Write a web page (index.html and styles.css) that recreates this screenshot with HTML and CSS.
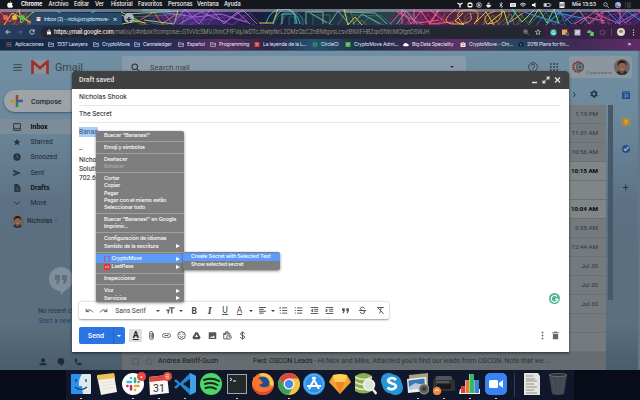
FILE: index.html
```
<!DOCTYPE html>
<html lang="es">
<head>
  <meta charset="UTF-8">
  <meta name="viewport" content="width=device-width, initial-scale=1.0">
  <title>Inbox (2) - nick@cryptomove</title>
  <link rel="stylesheet" href="styles.css">
</head>
<body>
  <svg class="sprite" width="0" height="0">
    <symbol id="folder" viewBox="0 0 12 10"><path d="M1 9V1h4l1 1.5h5V9zM1 4.5h10" fill="none" stroke="#aeb6c8" stroke-width="1.5"/></symbol>
    <symbol id="star" viewBox="0 0 24 24"><path d="M12 2l3 7 7.500.6-5.700 5 1.700 7.400-6.500-4-6.500 4 1.700-7.400-5.700-5L9 9z"/></symbol>
    <symbol id="lines" viewBox="0 0 24 24"><path d="M3 4h18M3 9h12M3 14h18M3 19h12" stroke="currentColor" stroke-width="2.500"/></symbol>
  </svg>

  <header class="menubar">
    <svg class="apple" viewBox="0 0 20 22"><path d="M14 0c0 3-2 5-4 5 0-3 2-5 4-5zM10 6c2 0 3-1 5-1 2 0 3 1 4 2-4 3-3 7 1 9-1 3-3 6-5 6-2 0-3-1-5-1s-3 1-4 1C3 22 0 16 1 11c1-6 6-6 9-5z" fill="#fff"/></svg>
    <nav class="menus">
      <b>Chrome</b><span>Archivo</span><span>Editar</span><span>Ver</span><span>Historial</span><span>Favoritos</span><span>Personas</span><span>Ventana</span><span>Ayuda</span>
    </nav>
    <div class="status">
      <svg viewBox="0 0 12 12"><path d="M1 2l5 3 5-3M6 5v6" stroke="#fff" stroke-width="2.500" fill="none"/></svg>
      <svg viewBox="0 0 12 12"><rect x="1" y="1" width="10" height="10" rx="3" fill="#fff"/><rect x="3" y="4" width="6" height="4" rx="1" fill="#222"/></svg>
      <svg viewBox="0 0 12 12"><g fill="none" stroke="#ccc" stroke-width="1.300"><circle cx="6" cy="6" r="5"/><circle cx="6" cy="6" r="2"/><path d="M3 2l6 8M9 2L3 10"/></g></svg>
      <svg viewBox="0 0 12 12"><path d="M0 6h9l2-1-2 4-3 2H3zM2 3h5v2H2zM5 1h2v2H5z" fill="#eee"/></svg>
      <svg viewBox="0 0 12 12"><path d="M3 3l6 6-3 2V1l3 2-6 6" fill="none" stroke="#ddd" stroke-width="1.300"/></svg>
      <svg viewBox="0 0 12 12"><rect y="2" width="12" height="8" rx="1" fill="#eee"/><path d="M2 5h8M3 8h6" stroke="#777"/></svg>
      <svg viewBox="0 0 12 12"><path d="M0 5q6-6 12 0M2.500 7q3.500-3 7 0M5 9q1-1 2 0" fill="none" stroke="#fff" stroke-width="1.700"/></svg>
      <svg viewBox="0 0 12 12"><path d="M2 4h3l4-3v10L5 8H2z" fill="#fff"/></svg>
      <svg viewBox="0 0 16 12"><path d="M1 3h12v6H1zM15 5v2" stroke="#ccc" stroke-width="1.500" fill="none"/><path d="M2 4h4v4H2z" fill="#fff"/></svg>
      <svg viewBox="0 0 12 12"><rect x="1" width="10" height="12" rx="1" fill="#eee"/><path d="M3 3v6l3-6v6l3-6v6" stroke="#555" fill="none"/></svg>
      <span class="clock">Mié 13:53</span>
      <svg viewBox="0 0 12 12"><circle cx="5" cy="5" r="3.500" fill="none" stroke="#ddd" stroke-width="1.300"/><path d="M8 8l4 4" stroke="#ddd" stroke-width="1.300"/></svg>
      <svg viewBox="0 0 12 12"><circle cx="6" cy="6" r="6" fill="#aab4ec"/><path d="M0 6q3-5 6 0t6 0q-2 6-6 5T0 6" fill="#a0509b"/><path d="M2 6q4-4 8-1-2 4-8 1" fill="#60d4ec"/></svg>
      <svg viewBox="0 0 12 12"><path d="M0 2h2M4 2h8M0 6h2M4 6h8M0 10h2M4 10h8" stroke="#777" stroke-width="1.300"/></svg>
    </div>
  </header>

  <div class="tabstrip">
    <svg class="art" viewBox="0 0 640 16" preserveAspectRatio="none">
      <defs><linearGradient id="sky"><stop offset="0" stop-color="#6a3042"/><stop offset=".08" stop-color="#203e58"/><stop offset=".2" stop-color="#18233d"/><stop offset=".3" stop-color="#492f82"/><stop offset=".4" stop-color="#171e3a"/><stop offset=".6" stop-color="#26434b"/><stop offset=".66" stop-color="#641e51"/><stop offset=".78" stop-color="#322d36"/><stop offset=".88" stop-color="#18294b"/><stop offset="1" stop-color="#381d50"/></linearGradient></defs>
      <path d="M0 0h640v16H0z" fill="url(#sky)"/>
      <g id="neon" fill="none" stroke-width="1">
        <path stroke="#ef5a62" d="M0 3l10 10L18 2l12 13M140 11l14-8 8 12 16-11M438 1l-9 14 24-2M580 15l16-14 8 14"/>
        <path stroke="#e7c83d" d="M4 16l8-12 20 10M120 5l11 6 15 3M259 14h14l5-14M344 0l4 16 7-8 7 8M463 4l-8 8 8 4M474 15l12-12 8 13M488 15l16-13 4 14"/>
        <path stroke="#85d853" d="M19 0l2 14 12-11 10 12M121 3l18 9-17 3M126 5l52-3-4 13-30-4M512 0l10 13 12-12M529 14l10-14 8 14 7-14 5 15"/>
        <path stroke="#34c3c6" d="M57 2l18 11 20-11M142 1h28M266 15c4-20 30-20 34 0M282 15V5h13v10M397 15l9-13 11 13M507 16l9-13M546 16l15-14"/>
        <path stroke="#b05cda" d="M160 0l13 15 12-15 14 15 12-15 13 15 13-12 13 12M179 15l22-12 24 10 18-12 14 14M166 4l30 4 25-3 26 8"/>
        <path stroke="#61b493" d="M273 15c6-20 22-20 24 0M306 15V3h17v12M310 4l17 10M329 15l9-13 11 13M345 3l30 1 12 11M353 15l9-10 18 10"/>
        <path stroke="#f35791" d="M390 15l13-14 8 14 10-13 9 13 9-14M397 3l22 11 20-3M402 0v15M414 0v15M430 1l15 12M565 12l14-11 10 14 13-12M574 15l12-7 19 4"/>
        <path stroke="#eda04c" d="M456 0q-20 15 0 15t14-11M464 16q-14-14 3-15t8 13M495 2q-15 5-8 13 16 0 15-15M510 13l13-9"/>
        <path stroke="#4e85dc" d="M524 3l35 11M557 1l15 14M607 2l12 12 17-10M615 15l12-13 13 9M548 2l39 8"/>
        <path stroke="#d14bb0" d="M602 15V3l15-2 8 13 15-11M594 4l26 11M620 0v15"/>
      </g>
      <use href="#neon" transform="translate(7 3)" opacity=".35"/>
      <path d="M0 0h640v3H0z" fill="#c2bfd1" opacity=".5"/>
    </svg>
    <div class="lights"><i class="red"></i><i class="yellow"></i><i class="green"></i></div>
    <div class="tab">
      <svg viewBox="0 0 12 10"><path d="M0 0h12v10H0z" fill="#eee"/><path d="M1 10V1l5 4 5-4v9" fill="none" stroke="#ce4540" stroke-width="2"/></svg>
      <span>Inbox (2) - nick@cryptomove-</span><em>×</em>
    </div>
    <div class="newtab">+</div>
  </div>

  <div class="addressbar">
    <div class="history"><svg viewBox="0 0 12 12"><path d="M11 6H2M6 1.500L1.500 6 6 10.500" stroke="#e8eaf4"/></svg><svg viewBox="0 0 12 12"><path d="M1 6h9M6 1.500l4.500 4.500L6 10.500" stroke="#646d83"/></svg><svg viewBox="0 0 12 12"><path d="M10 3.500A4.500 4.500 0 1 0 10.500 7M10.500 1v3.500H7" stroke="#e8eaf4"/></svg></div>
    <div class="omnibox">
      <svg viewBox="0 0 10 12"><path d="M1 5h8v6H1z" fill="#e8eaed"/><path d="M3 5V3q2-3 4 0v2" fill="none" stroke="#e8eaed" stroke-width="1.500"/></svg>
      <span class="url"><b>https://mail.google.com</b>/mail/u/1/#inbox?compose=GTvVlcSMVJXmCFfFVqJwDTcJtlwtpfkrLZQMzQbCZnBNltgxsLcsvtBNXFHBZqxSfWcMQfgnDSWJH</span>
      <svg class="find" viewBox="0 0 12 12"><path d="M8 8l3.500 3.500M3 5h4M5 3v4" stroke="#ccc"/><circle cx="5" cy="5" r="3.700" fill="none" stroke="#ccc"/></svg>
      <svg viewBox="0 0 24 24" fill="none" stroke="#ddd" stroke-width="2.500"><use href="#star"/></svg>
    </div>
    <div class="extensions">
      <svg viewBox="0 0 12 12"><circle cx="6" cy="6" r="5.500" fill="#29b998"/><path d="M8.500 4A3 3 0 1 0 9 7H6" fill="none" stroke="#e8fff8" stroke-width="1.500"/></svg>
      <svg viewBox="0 0 12 12"><path d="M0 1h9v9H0z" fill="#edac4c"/><path d="M6 6h6v6H6z" fill="#555c67"/></svg>
      <svg viewBox="0 0 12 12"><path d="M1 1h10v10H1z" fill="#b9bcd2"/><path d="M3 8l2-4 1 3 3-4" stroke="#f8f8ff" fill="none"/></svg>
      <svg viewBox="0 0 12 12"><path d="M0 5q3-6 8-1v3H0z" fill="#8c98a1"/><path d="M5 5h7v7H5z" fill="#37b452"/><path d="M8.500 6v5" stroke="#fff"/></svg>
      <svg viewBox="0 0 12 12"><circle cx="6" cy="6" r="4" fill="none" stroke="#6a5574" stroke-width="2" stroke-dasharray="2 1"/></svg>
      <i class="divider"></i>
      <svg class="me" viewBox="0 0 12 12"><circle cx="6" cy="6" r="6" fill="#d8d4c9"/><circle cx="6" cy="5" r="2.500" fill="#8b8062"/><path d="M2 10q4-4 8 0" fill="#f2eee4"/></svg>
      <svg viewBox="0 0 12 12"><path d="M6 1v2M6 5v2M6 9v2" stroke="#ddd" stroke-width="2"/></svg>
    </div>
  </div>

  <div class="bookmarks">
    <span><svg viewBox="0 0 12 12"><path d="M0 2h12M0 6h12M0 10h12" stroke="#bf7e77" stroke-width="2.400" stroke-dasharray="2.500 2"/></svg>Aplicaciones</span>
    <span><svg><use href="#folder"/></svg>1337 Lawyers</span>
    <span><svg><use href="#folder"/></svg>CryptoMove</span>
    <span><svg><use href="#folder"/></svg>Cannaledger</span>
    <span><svg><use href="#folder"/></svg>Español</span>
    <span><svg><use href="#folder"/></svg>Programming</span>
    <span><svg viewBox="0 0 12 12"><rect width="12" height="12" rx="2" fill="#d8413c"/><path d="M3 4h6M3 7h6" stroke="#fff"/></svg>La leyenda de la L...</span>
    <span><svg viewBox="0 0 12 12"><circle cx="6" cy="6" r="4.500" fill="none" stroke="#4aae5d" stroke-width="2"/><circle cx="6" cy="6" r="1.500" fill="#4aae5d"/></svg>CircleCI</span>
    <span><svg viewBox="0 0 12 12"><path d="M0 0h12v12H0z" fill="#58a942"/><path d="M3 6l2 2 4-5" stroke="#e5f4cf" fill="none" stroke-width="2"/></svg>CryptoMove Admi...</span>
    <span><svg viewBox="0 0 14 12"><path d="M2 10a3 3 0 0 1 0-5q2-4 6-2 2 0 3 2a2.500 2.500 0 0 1 0 5z" fill="#fff"/></svg>Big Data Speciality</span>
    <span><svg viewBox="0 0 12 12"><path d="M0 2h12v10H0z" fill="#eee"/><path d="M3 0h6v5H3z" fill="#e1a096"/><path d="M3 8h6" stroke="#cf5547" stroke-width="2"/></svg>CryptoMove - Chr...</span>
    <span><svg viewBox="0 0 12 12"><circle cx="6" cy="6" r="6" fill="#101722"/><path d="M4 11V8Q1 4 4 3h4q3 1 0 5v3" fill="#26637a"/></svg>2019 Plans for thi...</span>
    <b>»</b>
  </div>

  <main class="gmail">
    <aside class="sidebar">
      <div class="brand">
        <svg class="burger" viewBox="0 0 12 10"><path d="M0 1h12M0 5h12M0 9h12" stroke="#39454d" stroke-width="1.500"/></svg>
        <svg class="envelope" viewBox="0 0 18 14"><path d="M1 0h16v14H1z" fill="#8c9296"/><path d="M1.500 14V1.500L9 8l7.500-6.500V14" fill="none" stroke="#9b302d" stroke-width="2.600"/></svg>
        <span>Gmail</span>
      </div>
      <div class="compose-button"><svg viewBox="0 0 12 12"><path d="M6 0v6" stroke="#a34235"/><path d="M6 6v6" stroke="#30814a"/><path d="M0 6h5" stroke="#c1942b"/><path d="M5 6h7" stroke="#36609e"/></svg>Compose</div>
      <ul class="folders">
        <li class="current"><svg viewBox="0 0 12 12"><path d="M1 1h10v10H1zM1 8h3l2 1 2-1h3" fill="none" stroke="#30353a" stroke-width="1.500"/></svg>Inbox</li>
        <li><svg viewBox="0 0 24 24"><use href="#star"/></svg>Starred</li>
        <li><svg viewBox="0 0 12 12"><circle cx="6" cy="6" r="5.500"/><path d="M6 2.500V6l2.500 1.500" fill="none" stroke="#738899"/></svg>Snoozed</li>
        <li><svg viewBox="0 0 12 12"><path d="M0 1l12 5-12 5 1-4 6-1-6-1z"/></svg>Sent</li>
        <li class="bold"><svg viewBox="0 0 12 12"><path d="M2 0h5l4 4v8H2z"/><path d="M4 6h5M4 9h5" stroke="#60717f"/></svg>Drafts</li>
        <li><svg viewBox="0 0 12 12"><path d="M2 4l4 4 4-4" fill="none" stroke="#27313a" stroke-width="1.500"/></svg>More</li>
      </ul>
      <div class="person"><svg viewBox="0 0 26 26"><clipPath id="round"><circle cx="13" cy="13" r="13"/></clipPath><g id="face" clip-path="url(#round)"><path d="M0 0h26v26H0z" fill="#6b6561"/><path d="M3 26q2-8 10-8t10 8" fill="#292b32"/><path d="M9 15h8v6l-4 3-4-3z" fill="#76503f"/><ellipse cx="13" cy="12" rx="6" ry="7.500" fill="#8b604c"/><path d="M6 12Q5 2 13 2t7 10l-2-5q-5-2-9 0z" fill="#211c1b"/><path d="M10 16q3 2 6 0" stroke="#b29a8d" fill="none"/></g></svg>Nicholas<i></i></div>
      <div class="hangouts">
        <svg viewBox="0 0 24 28"><circle cx="12" cy="12" r="12" fill="#7e8e9b"/><path d="M11 20h8l-7 8z" fill="#7e8e9b"/><path d="M6 8h5v5l-2 4H7l1-4H6zM13 8h5v5l-2 4h-2l1-4h-2z" fill="#5a6f81"/></svg>
        <p>No recent chats</p><a>Start a new one</a>
      </div>
      <div class="tools"><svg viewBox="0 0 12 12"><circle cx="6" cy="3.500" r="3"/><path d="M0 11q1-4 6-4t6 4z"/></svg><svg viewBox="0 0 12 12"><path d="M6 0a5 5 0 0 1 5 5q0 4-5 7V10A5 5 0 1 1 6 0"/></svg><svg viewBox="0 0 12 12"><path d="M1 1h3l1 3-1.500 1.500q1 2 3 3L8 7l3 1v3Q2 12 1 1"/></svg></div>
    </aside>

    <section class="mail">
      <div class="topline">
        <div class="search"><svg viewBox="0 0 12 12"><circle cx="5" cy="5" r="3.700"/><path d="M8 8l4 4"/></svg><span>Search mail</span><i></i></div>
        <svg class="help" viewBox="0 0 12 12"><circle cx="6" cy="6" r="5.300" fill="none" stroke="#303c44"/><path d="M4 4.500q0-2 2-2t2 2q0 1-2 2V8M6 8.700v1.200" fill="none" stroke="#303c44"/></svg>
        <svg class="apps" viewBox="0 0 12 12"><path d="M0 1.500h12M0 6h12M0 10.500h12" stroke="#2b3740" stroke-width="2.500" stroke-dasharray="2.500 2.250"/></svg>
        <div class="account">
          <svg viewBox="0 0 14 14"><circle cx="6" cy="7" r="4.700" fill="none" stroke="#7f2d30" stroke-width="2.400" stroke-dasharray="1.500 .7"/><circle cx="8" cy="7" r="4" fill="#4f545b"/><path d="M6 5h4v4H6z" fill="none" stroke="#888"/></svg>
          <small>Cryptomove</small>
          <svg class="face" viewBox="0 0 26 26"><use href="#face"/></svg>
        </div>
      </div>
      <div class="actions"><span>›</span><svg viewBox="0 0 12 12"><circle cx="6" cy="6" r="3.300" fill="none" stroke="#26323b" stroke-width="2.300"/><path d="M6 0v12M.8 3l10.400 6M.8 9l10.400-6" stroke="#26323b" stroke-width="2" stroke-dasharray="2.500 7 2.500"/></svg></div>
      <div class="inbox">
        <div class="rows">
          <div class="row">1:19 PM</div>
          <div class="row">11:31 AM</div>
          <div class="row">10:56 AM</div>
          <div class="row unread">10:15 AM</div>
          <div class="row unread"></div>
          <div class="row unread">10:04 AM</div>
          <div class="row">9:35 AM</div>
          <div class="row">12:44 AM</div>
          <div class="row">Jul 30</div>
          <div class="row">Jul 30</div>
          <div class="row">Jul 30</div>
          <div class="row"></div>
          <div class="row"></div>
          <div class="row last"><i class="check"></i><svg viewBox="0 0 24 24"><use href="#star"/></svg><span class="from">Andrea Bailiff-Gush</span><span class="subject"><b>Fwd: OSCON Leads</b> - Hi Nick and Mike, Attached you'll find our leads from OSCON. Note that we ...</span></div>
        </div>
        <i class="thumb"></i>
      </div>
    </section>
    <aside class="addons">
      <svg viewBox="0 0 12 12"><path d="M0 0h12v12H0z" fill="#26508c"/><path d="M0 0h12v3H0z" fill="#3a65a1"/><path d="M3 5h3v4H3M8 5v4" stroke="#8ca6c5" fill="none"/></svg>
      <svg viewBox="0 0 12 12"><path d="M0 0h12v9l-3 3H0z" fill="#b3882b"/><circle cx="6" cy="5" r="2" fill="none" stroke="#dfc07b"/><path d="M5 9h2" stroke="#dfc07b"/></svg>
      <svg viewBox="0 0 12 12"><circle cx="6" cy="6" r="6" fill="#294f93"/><path d="M3 6l2 2 5-5" stroke="#a7b5ca" stroke-width="2" fill="none"/></svg>
      <b>+</b>
    </aside>
  </main>

  <footer class="desktop">
    <div class="dock">
      <div class="app running"><svg viewBox="0 0 22 22"><rect x="1" y="1" width="20" height="20" rx="1" fill="#dce9f3"/><path d="M1 1h11q-4 6-3 12h3l1 8H1z" fill="#2992ec"/><path d="M6 6v3M16 6v3M5 14q6 5 12 0" fill="none" stroke="#173c5c" stroke-width="1.200"/></svg></div>
      <div class="app"><svg viewBox="0 0 22 22"><path d="M1 3l17-2 3 18-16 3z" fill="#f3f1e9"/><path d="M1 2l17-2 1 5-17 2z" fill="#edc34e"/><path d="M5 10l13-2M5 13l14-2M6 16l13-2" stroke="#d6d5ce" stroke-width=".6"/></svg></div>
      <div class="app running"><svg viewBox="0 0 22 22"><circle cx="11" cy="11" r="11" fill="#fff"/><g fill="none" stroke-width="2.600" stroke-linecap="round"><path stroke="#44bde6" d="M5.500 9H9M9 5v.1"/><path stroke="#3bad78" d="M13 5.500V9M16.500 9h.1"/><path stroke="#e4ad37" d="M13 13h3.500M13 17v-.1"/><path stroke="#d3285f" d="M9 13v3.500M5.500 13h-.1"/></g></svg><i class="badge">•</i></div>
      <div class="app running"><svg viewBox="0 0 22 22"><path d="M1 4l18-2 2 18-19 2z" fill="#f8f8f6"/><path d="M1 4l18-2 .6 5L1.500 9z" fill="#dc4840"/><text x="5" y="18.500" font-size="10.500" font-family="Roboto" fill="#333">31</text></svg><i class="badge">6</i></div>
      <div class="app running"><svg viewBox="0 0 22 22"><path d="M16 0l6 3v16l-6 3L6 12l-4 4-2-2 4-3-4-3 2-2 4 4z" fill="#2386ce"/><path d="M16 6v10l-7-5z" fill="#111b34"/><path d="M16 0l6 3v16l-6 3z" fill="#3da2e8"/></svg></div>
      <div class="app"><svg viewBox="0 0 22 22"><circle cx="11" cy="11" r="11" fill="#4bd765"/><path d="M4 7q8-3 15 1M5 11q7-2.500 12.500 1M5.500 15q6-2 10.500 1" fill="none" stroke="#17291f" stroke-width="2" stroke-linecap="round"/></svg></div>
      <div class="app running"><svg viewBox="0 0 22 22"><path d="M1 1h20v20H1z" fill="#a2a5a6"/><path d="M2 2h18v18H2z" fill="#24292c"/><path d="M4 5l2 1.500L4 8M7 8h3" stroke="#eee" fill="none"/></svg></div>
      <div class="app"><svg viewBox="0 0 22 22"><circle cx="11" cy="11" r="11" fill="#f17a28"/><path d="M7 1q10-3 14 7 1 3 0 6l-5-4z" fill="#ffca41"/><circle cx="11" cy="10" r="6.500" fill="#244c94"/><path d="M1 4l3 2 4 0 3 4-4 2q4 4 9 1-2 6-8 5-6-1-7-9z" fill="#f8762b"/><path d="M0 11q3 9 13 8 6-1 9-8-1 11-11 11Q2 22 0 11" fill="#e93f3e"/></svg></div>
      <div class="app running"><svg viewBox="0 0 22 22"><circle cx="11" cy="11" r="11" fill="#efc541"/><path d="M1.500 5.500A11 11 0 0 1 20.500 5.500H11L7 14z" fill="#d94a3d"/><path d="M1.500 5.500A11 11 0 0 0 10.500 22L15 14H7z" fill="#3e9d57"/><circle cx="11" cy="11" r="5.500" fill="#f5f5f5"/><circle cx="11" cy="11" r="4.200" fill="#4688e8"/></svg></div>
      <div class="app"><svg viewBox="0 0 22 22"><circle cx="11" cy="11" r="11" fill="#2c91e7"/><circle cx="11" cy="11" r="9.300" fill="none" stroke="#73bdf2"/><path d="M12.500 4L6 16M9.500 4L16 16M4 13h14" stroke="#fff" stroke-width="2"/></svg></div>
      <div class="app"><svg viewBox="0 0 22 22"><path d="M4 2l7-1 7 1 4 7-11 12L0 9z" fill="#f4a42f"/><path d="M4 2l7-1 7 1-2 7H6z" fill="#ffcf57"/><path d="M6 9h10l-5 12z" fill="#ef8525"/></svg></div>
      <div class="app"><svg viewBox="0 0 22 22"><path d="M0 3q9-6 17 0v15q-9 5-17 0z" fill="#8aae52"/><path d="M0 4q8 5 17 0M0 9q8 5 17 0M0 14q8 5 17 0" fill="none" stroke="#e0e8c7" stroke-width="1.500"/><circle cx="14" cy="12" r="5.500" fill="#d5e6d4" stroke="#eff0e9" stroke-width="1.500"/><path d="M17.500 16l4 5" stroke="#eee" stroke-width="2.500"/></svg></div>
      <div class="app"><svg viewBox="0 0 22 22"><rect width="15" height="15" rx="7" fill="#2695d8"/><rect x="7" y="7" width="15" height="15" rx="7" fill="#2695d8"/><circle cx="11" cy="11" r="9.800" fill="#2695d8"/><path d="M15 7q-3-3-6-1.500c-4 2-1 4 2 5 5 1 5 4 1 5.500q-3 1-5.500-1.500" fill="none" stroke="#fff" stroke-width="2.600"/></svg></div>
      <div class="app running"><svg viewBox="0 0 22 22"><path d="M2 2l19-2v15L3 17z" fill="#a8a17f"/><path d="M0 6l19-2 1 14-19 2z" fill="#eef1f4"/><path d="M1.500 7.500l16-2 .5 9-16 2z" fill="#3b76b4"/><path d="M2 14l6-4 10 2v3L2 17z" fill="#b9c9d9"/><circle cx="17" cy="16" r="5" fill="#615f58" stroke="#bbb" stroke-width=".8"/><circle cx="17" cy="16" r="2" fill="#343b42"/></svg></div>
      <div class="app running"><svg viewBox="0 0 22 22"><path d="M3 3h15l4 5v10H0V8z" fill="#303133"/><path d="M4 3h14l1 4H2z" fill="#525354"/><path d="M4 11h14v5H4z" fill="#17191b"/><path d="M3 9h13" stroke="#797a7a"/><circle cx="4" cy="18" r="4.300" fill="#ed8643"/><path d="M2 18q2-3 4 0" stroke="#fff" fill="none"/></svg></div>
      <div class="app running"><svg viewBox="0 0 22 22"><path d="M1 16h20v5H0z" fill="#efefed"/><path d="M2 13h4v7H2z" fill="#da4438"/><path d="M6 7h4v13H6z" fill="#e9783a"/><path d="M10 1h5v19h-5z" fill="#38b95c"/><path d="M15 7h5v13h-5z" fill="#3b82d8"/><path d="M6 7h1v13H6M10 1h1v19h-1M15 7h1v13h-1" fill="#fff" opacity=".4"/></svg></div>
      <div class="app running"><svg viewBox="0 0 22 22"><rect width="22" height="22" rx="5" fill="#3982f3"/><rect x="4" y="7" width="9" height="8" rx="1.500" fill="#fff"/><path d="M14 10l4-3v8l-4-3z" fill="#fff"/></svg></div>
      <i class="rule"></i>
      <div class="app"><svg viewBox="0 0 22 22"><path d="M3 0h14l2 3v19H3z" fill="#e3e3df"/><path d="M5 3h7M5 6h9M5 8h11M5 11h8M5 14h11M5 17h8M5 20h11" stroke="#898987" stroke-width=".9"/></svg></div>
      <div class="app"><svg viewBox="0 0 22 22"><path d="M2 2h18l-3 19q-6 2-12 0z" fill="#42484f"/><ellipse cx="11" cy="2" rx="9" ry="1.500" fill="#292f36" stroke="#858b91" stroke-width=".6"/><path d="M5 5l3 15M11 5v16M17 5l-3 15" stroke="#656b72" stroke-width=".4"/></svg></div>
    </div>
  </footer>

  <section class="draft">
    <div class="draft-title"><span>Draft saved</span><svg viewBox="0 0 34 10"><path d="M1 7.500h5" stroke="#ddd" stroke-width="1.500"/><path d="M12 8l2.500-2.500M15.500 4.500L18 2M12 5.500V8h2.500M15.500 2H18v2.500" stroke="#ddd" stroke-width="1.100" fill="none"/><path d="M24 2.500l5 5M29 2.500l-5 5" stroke="#ddd" stroke-width="1.400"/></svg></div>
    <div class="field">Nicholas Shook</div>
    <div class="field">The Secret</div>
    <div class="message">
      <p><mark>Banan</mark></p><p>&nbsp;</p><p>--</p><p>Nichol</p><p>Soluti</p><p>702.68</p>
      <i class="grammarly"><svg viewBox="0 0 10 10"><path d="M7.200 3.200A3 3 0 1 0 8 5.500H5.500M8 5v2.500" stroke="#fff" stroke-width="1.100" fill="none"/></svg></i>
    </div>
    <div class="format">
      <svg viewBox="0 0 24 24"><path d="M3 7v8h8M4 14q9-9 17 3"/></svg>
      <svg viewBox="0 0 24 24"><path d="M21 7v8h-8M20 14q-9-9-17 3"/></svg>
      <span class="font">Sans Serif</span><i class="arrow"></i>
      <svg viewBox="0 0 24 24"><path d="M8 5h15M15.500 5v15M1 11h10M6 11v9" stroke-width="3.500"/></svg><i class="arrow"></i>
      <b>B</b><b class="italic">I</b><b class="under">U</b><b class="under plain">A</b><i class="arrow"></i>
      <svg viewBox="0 0 24 24"><use href="#lines"/></svg><i class="arrow"></i>
      <svg viewBox="0 0 24 24"><path d="M8 5h14M8 12h14M8 19h14M3 2v6M2 12h3M2 19h3"/></svg>
      <svg viewBox="0 0 24 24"><path d="M8 5h14M8 12h14M8 19h14M2 5h3M2 12h3M2 19h3"/></svg>
      <svg viewBox="0 0 24 24"><path d="M2 4h20M11 9h11M11 14h11M2 20h20M7 8l-4 4 4 4z"/></svg>
      <svg viewBox="0 0 24 24"><path d="M2 4h20M11 9h11M11 14h11M2 20h20M3 8l4 4-4 4z"/></svg>
      <svg viewBox="0 0 24 24"><path d="M3 6h7v7l-3 6H4l2-6H3zM14 6h7v7l-3 6h-3l2-6h-3z" fill="#555" stroke="none"/></svg>
      <svg viewBox="0 0 24 24"><path d="M2 12h20M18 7q-2-4-6-4-6 0-6 4 0 3 6 5 6 1 6 4 0 4-6 4-5 0-6-4"/></svg>
      <svg viewBox="0 0 24 24"><path d="M5 4h16M14 4l-4 16M3 3l18 18"/></svg>
    </div>
    <div class="sendline">
      <div class="send"><span>Send</span><i></i></div>
      <b class="text-style">A</b>
      <svg viewBox="0 0 24 24"><path d="M17 6v12q-1 5-5 5t-5-5V5q1-4 4-4t4 4v12q-3 3-4 0V6"/></svg>
      <svg viewBox="0 0 24 24"><path d="M11 7H6q-5 1-5 5t5 5h5M13 7h5q5 1 5 5t-5 5h-5M7 12h10"/></svg>
      <svg viewBox="0 0 24 24"><circle cx="12" cy="12" r="10"/><path d="M7 14q5 6 10 0M8 7v3M16 7v3"/></svg>
      <svg viewBox="0 0 24 24"><path d="M9 3h6l8 14-3 5H4l-3-5zM12 9l-4 7h8z" fill="#555" fill-rule="evenodd" stroke="none"/></svg>
      <svg viewBox="0 0 24 24"><path d="M2 3h20v18H2zM5 18h14l-4-6-4 4-2-2z" fill="#555" fill-rule="evenodd" stroke="none"/></svg>
      <svg viewBox="0 0 24 24"><path d="M12 21H2V6h16v3M7 6V2h6v4M2 9h7"/><circle cx="16" cy="16" r="6"/><path d="M16 12v4l3 1"/></svg>
      <svg viewBox="0 0 24 24"><path d="M12 1v22M18 7q-2-3-6-3-5 0-5 4 0 3 5 4 6 1 6 4 0 4-6 4-5 0-6-4"/></svg>
      <svg class="dots" viewBox="0 0 24 24"><path d="M12 2v4M12 10v4M12 18v4" stroke-width="4"/></svg>
      <svg viewBox="0 0 24 24"><path d="M5 8h14v14H5zM3 3h18v3H3zM9 1h6v2H9z" fill="#666" stroke="none"/></svg>
    </div>
  </section>

  <ul class="context">
    <li>Buscar "Bananas!"</li><hr>
    <li>Emoji y símbolos</li><hr>
    <li>Deshacer</li><li class="off">Rehacer</li><hr>
    <li>Cortar</li><li>Copiar</li><li>Pegar</li><li>Pegar con el mismo estilo</li><li>Seleccionar todo</li><hr>
    <li>Buscar "Bananas!" en Google</li><li>Imprimir...</li><hr>
    <li>Configuración de idiomas</li><li class="more">Sentido de la escritura</li><hr>
    <li class="more tall active"><svg viewBox="0 0 12 12"><path d="M4 1H1v10h3M8 1h3v10H8" fill="none" stroke="#a95c8a" stroke-width="2"/></svg>CryptoMove</li>
    <li class="more tall"><svg viewBox="0 0 12 12"><path d="M0 0h12v12H0z" fill="#dd3936"/><path d="M2 6h8" stroke="#fff" stroke-width="2" stroke-dasharray="2 1"/></svg>LastPass</li><hr>
    <li>Inspeccionar</li><hr>
    <li class="more">Voz</li><li class="more">Servicios</li>
  </ul>
  <ul class="context submenu"><li class="tall active">Create Secret with Selected Text</li><li>Show selected secret</li></ul>
</body>
</html>
```
FILE: styles.css
```
* {
  box-sizing: border-box;
}
body {
  width: 640px;
  height: 400px;
  margin: 0;
  overflow: hidden;
  display: flex;
  flex-direction: column;
  position: relative;
  background: #080b18;
  color: #222;
  font-family: Roboto, "Liberation Sans", sans-serif;
  font-size: 7px;
}
svg {
  display: block;
  flex: none;
}
ul, p {
  margin: 0;
  padding: 0;
  list-style: none;
}
.sprite {
  position: absolute;
}
span {
  white-space: nowrap;
}

/* menu bar */
.menubar {
  height: 9px;
  flex: none;
  display: flex;
  align-items: center;
  background: #14181d;
  color: #f4f4f4;
  font: 500 5.6px/9px Inter, sans-serif;
  letter-spacing: -.05px;
}
.apple {
  width: 6px;
  height: 7px;
  margin: 0 8px 0 7px;
}
.menus {
  display: grid;
  grid-template-columns: 27.5px 25.5px 21px 16px 27px 30px 29px 27px 20px;
}
.status {
  margin-left: auto;
  padding-right: 8px;
  display: grid;
  grid-template-columns: 10px 9px 9px 12px 12px 11px 9px 14px 13px 15px 30px 13px 12px 8px;
  justify-items: center;
  align-items: center;
}
.status svg {
  width: 6px;
  height: 6px;
}
.status svg:nth-child(9) {
  width: 9px;
}
.clock {
  font-size: 5.300px;
}

/* browser chrome */
.tabstrip {
  height: 16px;
  flex: none;
  display: flex;
  align-items: flex-end;
  position: relative;
}
.art {
  position: absolute;
  width: 640px;
  height: 16px;
}
.lights {
  width: 31px;
  height: 16px;
  padding-left: 3px;
  display: flex;
  align-items: center;
  gap: 3.500px;
  position: relative;
}
.lights i {
  width: 5px;
  height: 5px;
  border-radius: 50%;
}
.red { background: #f0605a; }
.yellow { background: #edba3e; }
.green { background: #5fbb48; }
.tab {
  width: 91px;
  height: 12px;
  padding: 0 5px;
  display: flex;
  align-items: center;
  position: relative;
  border-radius: 3px 3px 0 0;
  background: #244b69;
  color: #e4e9f2;
  font: 5.100px/12px Inter, sans-serif;
  letter-spacing: -.26px;
}
.tab svg {
  width: 5px;
  height: 4px;
  margin-right: 3px;
}
.tab em {
  margin-left: auto;
  font-style: normal;
  font-size: 7px;
}
.newtab {
  width: 10px;
  height: 10px;
  margin: 0 0 2px 2px;
  position: relative;
  border-radius: 50%;
  background: #aeb1bd;
  color: #222736;
  font: bold 10px/10px Inter, sans-serif;
  text-align: center;
}
.addressbar {
  height: 14px;
  flex: none;
  display: flex;
  align-items: center;
  background: linear-gradient(90deg, #263e60, #20233e 20%, #252746 60%, #352344 85%, #3c1f42);
}
.history {
  width: 41px;
  padding-left: 5px;
  display: flex;
  gap: 6px;
}
.history svg {
  width: 6px;
  height: 6px;
  fill: none;
  stroke-width: 1.600;
}
.omnibox {
  width: 504px;
  height: 11px;
  padding: 0 4px 0 5px;
  display: flex;
  align-items: center;
  border-radius: 6px;
  background: #24272f;
}
.omnibox svg {
  width: 6px;
  height: 6px;
}
.url {
  margin-left: 2px;
  color: #8c8f98;
  font: 5.500px Inter, sans-serif;
  letter-spacing: -.13px;
}
.url b {
  color: #f1f1f3;
  font-weight: 500;
}
.find {
  margin: 0 6px 0 auto;
}
.extensions {
  padding-left: 5px;
  display: flex;
  align-items: center;
  gap: 5.200px;
}
.extensions svg {
  width: 7px;
  height: 7px;
}
.extensions .me {
  width: 8px;
  height: 8px;
}
.divider {
  width: 1px;
  height: 8px;
  background: #574361;
}
.bookmarks {
  height: 11px;
  flex: none;
  padding: 0 9px 1px 6px;
  display: grid;
  grid-template-columns: 42px 45px 41px 44px 32px 44px 58px 33px 58px 57px 58px 1fr auto;
  align-items: center;
  background: linear-gradient(90deg, #142743, #1b3358 18%, #332859 28%, #5c315e 35%, #2a244b 42%, #245370 49%, #1e2946 58%, #5a3164 71%, #274660 80%, #3e2b55 90%, #5f2c68);
  color: #e3e6f0;
  font: 5.100px/10px Inter, sans-serif;
  letter-spacing: -.2px;
}
.bookmarks span {
  display: flex;
  align-items: center;
  gap: 3px;
}
.bookmarks svg {
  width: 6px;
  height: 5px;
}

/* mailbox behind the draft window */
.gmail {
  height: 320px;
  flex: none;
  display: flex;
  border-top: 1px solid #45566a;
  background: linear-gradient(#718fa4, #6d899d 20%, #5b7082 50%, #5b6f7e 85%, #495c6c);
}
.sidebar {
  width: 122px;
  flex: none;
}
.brand {
  height: 32px;
  padding: 0 0 0 13px;
  display: flex;
  align-items: center;
  color: #37444d;
  font-size: 10.800px;
}
.burger {
  width: 9px;
  height: 7px;
  margin-right: 9px;
}
.envelope {
  width: 18px;
  height: 14px;
  margin-right: 6px;
}
.compose-button {
  width: 76px;
  height: 22px;
  margin: 7px 0 7px 4px;
  padding-left: 7px;
  display: flex;
  align-items: center;
  gap: 8px;
  border-radius: 11px;
  background: #9ea3a7;
  box-shadow: 0 1px 2px #46596a;
  color: #25282b;
  font-size: 7.200px;
  font-weight: 500;
}
.compose-button svg {
  width: 12px;
  height: 12px;
  stroke-width: 2.500;
}
.folders li {
  height: 15.300px;
  padding-left: 13px;
  display: flex;
  align-items: center;
  gap: 9.500px;
  color: #1f2a32;
  font-size: 6.900px;
}
.folders svg {
  width: 8px;
  height: 8px;
  fill: #28333c;
}
.folders .current {
  background: #7d8c99;
  color: #0b0d0f;
  font-weight: bold;
}
.folders .bold {
  color: #101820;
  font-weight: bold;
}
.person {
  margin-top: 4px;
  padding-left: 11px;
  display: flex;
  align-items: center;
  gap: 3px;
  color: #15202a;
  font-size: 6.500px;
}
.person svg {
  width: 13px;
  height: 13px;
}
.person i {
  border: 1.500px solid transparent;
  border-top-color: #27333c;
}
.hangouts {
  margin-top: 39px;
  display: flex;
  flex-direction: column;
  align-items: center;
  color: #28343e;
  font-size: 6.500px;
  line-height: 10px;
}
.hangouts svg {
  width: 24px;
  height: 28px;
  margin-bottom: 11px;
}
.hangouts a {
  color: #1b4578;
}
.tools {
  margin-top: 32px;
  padding-left: 39px;
  display: flex;
  gap: 9.500px;
}
.tools svg {
  width: 8px;
  height: 8px;
  fill: #202b34;
}
.mail {
  width: 491px;
  flex: none;
  display: flex;
  flex-direction: column;
}
.topline {
  height: 32px;
  display: flex;
  align-items: center;
}
.search {
  width: 344px;
  height: 23px;
  padding: 0 12px 0 9px;
  flex: none;
  display: flex;
  align-items: center;
  gap: 10px;
  border-radius: 3px;
  background: #879aa9;
  color: #364550;
  font-size: 7.600px;
}
.search svg {
  width: 9px;
  height: 9px;
  fill: none;
  stroke: #27343d;
  stroke-width: 1.400;
}
.search i {
  margin-left: auto;
  border: 2.500px solid transparent;
  border-top-color: #26333c;
  border-bottom: 0;
}
.help {
  width: 10px;
  height: 10px;
  margin-left: 62px;
}
.apps {
  width: 8px;
  height: 8px;
  margin-left: 12px;
}
.account {
  width: 63px;
  height: 22px;
  margin-left: 11px;
  padding: 0 2px 0 3px;
  flex: none;
  display: flex;
  align-items: center;
  border-radius: 3px;
  background: #8c969e;
}
.account > svg {
  width: 14px;
  height: 14px;
}
.account small {
  margin-top: 11px;
  color: #40484e;
  font-size: 3.500px;
  letter-spacing: .75px;
}
.account .face {
  width: 16px;
  height: 16px;
  margin-left: auto;
}
.actions {
  height: 22px;
  padding-right: 15px;
  display: flex;
  align-items: center;
  justify-content: flex-end;
  gap: 14px;
  color: #26323b;
  font-size: 12px;
}
.actions svg {
  width: 8px;
  height: 8px;
}
.inbox {
  height: 265px;
  display: flex;
  gap: 2px;
}
.rows {
  width: 484px;
  height: 265px;
  overflow: hidden;
  background: #747a7e;
}
.row {
  height: 19px;
  padding-right: 8px;
  display: flex;
  align-items: center;
  justify-content: flex-end;
  border-bottom: 1px solid #6a7074;
  color: #303539;
  font-size: 6.200px;
}
.unread {
  background: #808588;
  color: #050607;
  font-weight: bold;
}
.last {
  padding: 0 0 0 10px;
  justify-content: flex-start;
  background: #666c70;
  font-size: 7px;
}
.last svg {
  width: 8px;
  height: 8px;
  margin: 0 5px 0 6px;
  fill: none;
  stroke: #525a60;
  stroke-width: 2;
}
.last b {
  color: #181c1f;
  font-weight: normal;
}
.subject {
  letter-spacing: -.06px;
}
.check {
  width: 7px;
  height: 7px;
  border: 1px solid #525a60;
}
.from {
  width: 95px;
  color: #181c1f;
}
.thumb {
  width: 5px;
  height: 195px;
  background: #465969;
}
.addons {
  flex: 1;
  padding-top: 40px;
  display: flex;
  flex-direction: column;
  align-items: center;
  gap: 19px;
  border-right: 2px solid #627789;
}
.addons svg {
  width: 8px;
  height: 8px;
}
.addons b {
  margin-top: 9px;
  color: #26333d;
  font-size: 11px;
  font-weight: normal;
}

/* dock */
.desktop {
  height: 30px;
  flex: none;
  display: flex;
  justify-content: center;
}
.dock {
  width: 508px;
  padding: 0 2px;
  display: flex;
  background: #10172b;
}
.app {
  width: 25.940px;
  padding: 3px 0 0 2px;
  position: relative;
}
.app > svg {
  width: 22px;
  height: 22px;
}
.running::after {
  content: "";
  position: absolute;
  left: 12px;
  bottom: 1px;
  width: 2px;
  height: 1px;
  background: #ccd1da;
}
.badge {
  position: absolute;
  top: 2px;
  right: 0;
  width: 9px;
  height: 9px;
  border-radius: 50%;
  background: #e94a40;
  color: #fff;
  font: 6px/9px Inter, sans-serif;
  text-align: center;
}
.rule {
  width: 1px;
  height: 24px;
  margin: 3px 4px 0 5px;
  background: #343c50;
}

/* draft window */
.draft {
  position: absolute;
  left: 72px;
  top: 71px;
  width: 497px;
  height: 281px;
  display: flex;
  flex-direction: column;
  border-radius: 3px 3px 0 0;
  background: #fff;
  box-shadow: 0 1px 3px rgba(0, 0, 0, .6);
}
.draft-title {
  height: 18px;
  padding: 0 4px 0 7px;
  display: flex;
  align-items: center;
  justify-content: space-between;
  border-radius: 3px 3px 0 0;
  background: #404040;
  color: #e1e1e1;
  font-size: 6.900px;
  font-weight: 500;
}
.draft-title svg {
  width: 34px;
  height: 10px;
}
.field {
  height: 17px;
  margin: 0 9px 0 7px;
  border-bottom: 1px solid #e7e7e7;
  color: #222;
  font-size: 6.900px;
  line-height: 17px;
}
.message {
  height: 179px;
  padding: 5px 7px 0;
  position: relative;
  font-size: 6.700px;
  line-height: 9.200px;
}
mark {
  padding: 1px 0;
  background: #a9cdf7;
  color: #35506e;
}
.grammarly {
  position: absolute;
  right: 9px;
  bottom: -2px;
  width: 11px;
  height: 11px;
  border-radius: 50%;
  background: #4cb68f;
}
.format {
  width: 310px;
  height: 17px;
  margin-left: 7px;
  padding-left: 4px;
  display: grid;
  grid-template-columns: 13.500px 13px 42px 13px 11px 11px 15.500px 15.500px 15px 14px 8px 15px 6px 15.500px 15.500px 15.500px 15px 16.500px 18px 17px;
  align-items: center;
  justify-items: center;
  border-radius: 2px;
  box-shadow: 0 .5px 2px rgba(0, 0, 0, .4);
  color: #444;
}
.format svg, .sendline > svg {
  width: 9px;
  height: 9px;
  fill: none;
  stroke: #555;
  stroke-width: 2.500;
}
.format b {
  font-size: 8.500px;
}
.format .italic {
  font-family: "Liberation Serif", serif;
  font-size: 10px;
  font-style: italic;
}
.format .under {
  border-bottom: 1px solid #555;
  font-weight: normal;
  line-height: 8px;
}
.font {
  font-size: 6.800px;
}
.arrow {
  border: 2px solid transparent;
  border-top-color: #444;
  border-bottom: 0;
}
.sendline {
  padding: 8px 9px 0 7px;
  display: flex;
  align-items: center;
  gap: 6.300px;
}
.send {
  width: 46px;
  height: 17px;
  margin-right: -2px;
  display: flex;
  align-items: center;
  border-radius: 2px;
  background: #2b74e2;
  color: #fff;
  font-size: 7.200px;
  font-weight: 500;
}
.send span {
  width: 35px;
  text-align: center;
  border-right: 1px solid #1b62cd;
  line-height: 17px;
}
.send i {
  margin-left: 3px;
  border: 2px solid transparent;
  border-top-color: #fff;
  border-bottom: 0;
}
.text-style {
  width: 13px;
  height: 13px;
  margin-right: -2px;
  background: #dedede;
  font-size: 9px;
  line-height: 13px;
  text-align: center;
  text-decoration: underline;
}
.sendline .dots {
  margin-left: auto;
  margin-right: -2px;
}

/* right-click menu */
.context {
  position: absolute;
  left: 96px;
  top: 131px;
  width: 88px;
  height: 171px;
  padding-top: 1px;
  border-radius: 2px;
  background: #7e7e7e;
  box-shadow: 0 1px 3px rgba(0, 0, 0, .5);
  color: #fff;
  font: 500 5.400px/7.300px Inter, sans-serif;
  letter-spacing: -.15px;
}
.context li {
  height: 7.300px;
  padding: 0 4px 0 8px;
  display: flex;
  align-items: center;
  white-space: nowrap;
}
.context hr {
  height: 1px;
  margin: 1.800px 0;
  border: 0;
  background: #a0a0a0;
}
.context .off {
  color: #aaa;
}
.context .tall {
  height: 8.200px;
}
.context .active {
  background: #5c9bf7;
}
.context li svg {
  width: 6px;
  height: 6px;
  margin-right: 1.500px;
}
.more::after {
  content: "";
  margin-left: auto;
  border: 2px solid transparent;
  border-left: 4px solid #fff;
  border-right: 0;
}
.submenu {
  left: 183px;
  top: 252px;
  width: 97px;
  height: 18px;
}
```
